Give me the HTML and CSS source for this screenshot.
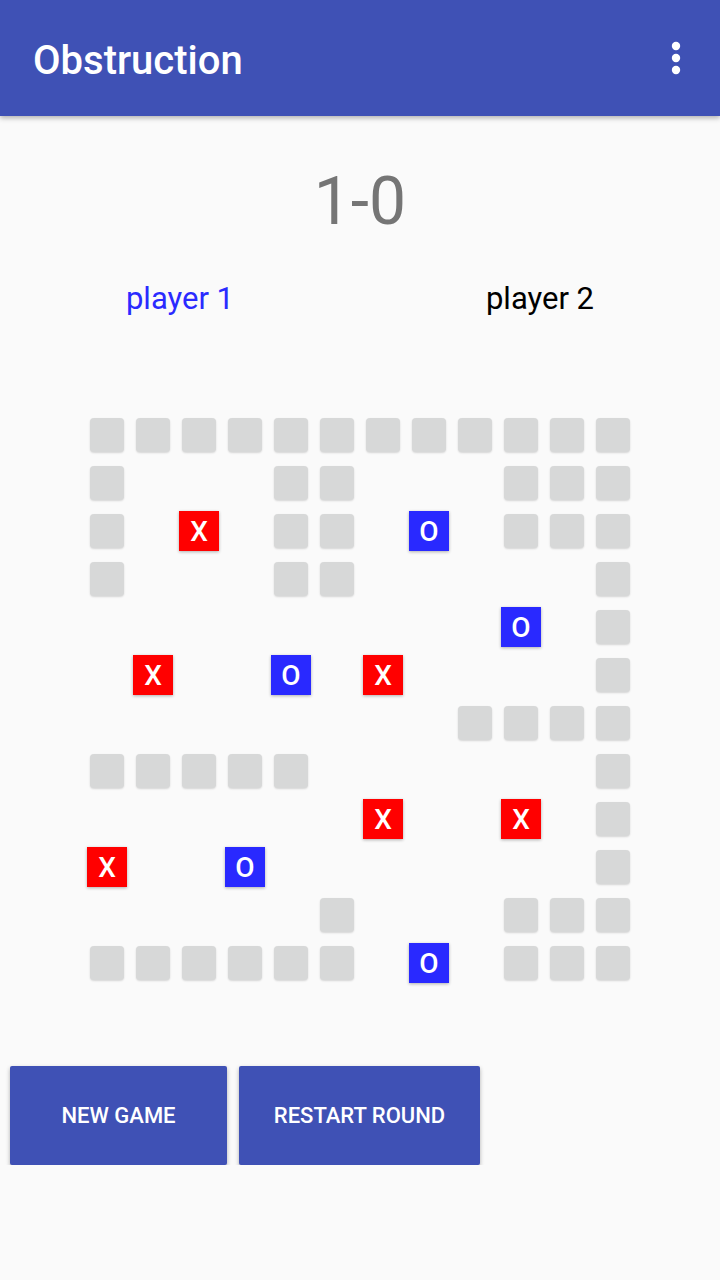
FILE: index.html
```html
<!DOCTYPE html>
<html>
	<head>
		<title>Obstruction</title>
		<meta charset="utf-8">
		<link rel="stylesheet" href="styles.css">
	</head>
	<body>
		<div class="appbar">
			<div class="title">Obstruction</div>
			<svg class="menu" width="12" height="40" viewBox="0 0 12 40">
				<circle cx="6" cy="8" r="4.2" fill="#fff"/>
				<circle cx="6" cy="20" r="4.2" fill="#fff"/>
				<circle cx="6" cy="32" r="4.2" fill="#fff"/>
			</svg>
		</div>

		<div class="score">1-0</div>

		<div class="players">
			<div class="player active">player 1</div>
			<div class="player">player 2</div>
		</div>

		<div id="board" class="board"></div>

		<div class="actions">
			<button class="btn btnNew">NEW GAME</button>
			<button class="btn btnRestart">RESTART ROUND</button>
		</div>

		<script>
			// # = blocked, X / O = played, . = free
			var rows=[
				"############",
				"#...##...###",
				"#.X.##.O.###",
				"#...##.....#",
				".........O.#",
				".X..O.X....#",
				"........####",
				"#####......#",
				"......X..X.#",
				"X..O.......#",
				".....#...###",
				"######.O.###"
			];
			var board=document.getElementById("board");
			for (var r=0; r<rows.length; r++)
				{
					for (var c=0; c<rows[r].length; c++)
						{
							var ch=rows[r][c];
							var cell=document.createElement("div");
							cell.className="cell";
							if (ch=="#")
								{
									var tile=document.createElement("div");
									tile.className="tile";
									cell.appendChild(tile);
								}
							if (ch=="X" || ch=="O")
								{
									var mark=document.createElement("div");
									mark.className="mark "+(ch=="X" ? "markX" : "markO");
									mark.innerHTML=ch;
									cell.appendChild(mark);
								}
							board.appendChild(cell);
						}
				}
		</script>
	</body>
</html>
```

FILE: styles.css
```css
body
	{
		margin: 0;
		background-color: #fafafa;
		font-family: Roboto, "Noto Sans", sans-serif;
	}
.appbar
	{
		height: 116px;
		background-color: #3f51b5;
		display: flex;
		align-items: center;
		justify-content: space-between;
		padding: 0 38px 0 33px;
		box-shadow: 0 2px 5px rgba(0,0,0,0.3);
	}
.title
	{
		color: white;
		font-size: 40px;
		font-weight: 500;
		margin-top: 4px;
	}
.menu
	{
		display: block;
	}
.score
	{
		text-align: center;
		color: #757575;
		font-size: 66px;
		margin-top: 46px;
		line-height: 80px;
	}
.players
	{
		display: flex;
		margin-top: 38px;
	}
.player
	{
		flex: 1;
		text-align: center;
		font-size: 31px;
		color: #000;
	}
.active
	{
		color: #2a2aff;
	}
.board
	{
		display: grid;
		grid-template-columns: repeat(12, 46px);
		grid-auto-rows: 48px;
		justify-content: center;
		margin-top: 94px;
	}
.cell
	{
		display: flex;
		align-items: center;
		justify-content: center;
	}
.tile
	{
		width: 34px;
		height: 34px;
		border-radius: 4px;
		background-color: #d7d8d8;
		box-shadow: 0 1px 2px rgba(0,0,0,0.15);
	}
.mark
	{
		width: 40px;
		height: 40px;
		color: white;
		font-size: 28px;
		font-weight: 500;
		line-height: 41px;
		text-align: center;
		box-shadow: 0 1px 3px rgba(0,0,0,0.3);
	}
.markX
	{
		background-color: #ff0000;
	}
.markO
	{
		background-color: #2929ff;
	}
.actions
	{
		display: flex;
		gap: 12px;
		padding-left: 10px;
		margin-top: 79px;
	}
.btn
	{
		height: 99px;
		border: none;
		border-radius: 2px;
		background-color: #3f51b5;
		color: white;
		font-family: Roboto, sans-serif;
		font-size: 22px;
		font-weight: 500;
		box-shadow: 0 2px 4px rgba(0,0,0,0.3);
	}
.btnNew
	{
		width: 217px;
	}
.btnRestart
	{
		width: 241px;
	}
```
